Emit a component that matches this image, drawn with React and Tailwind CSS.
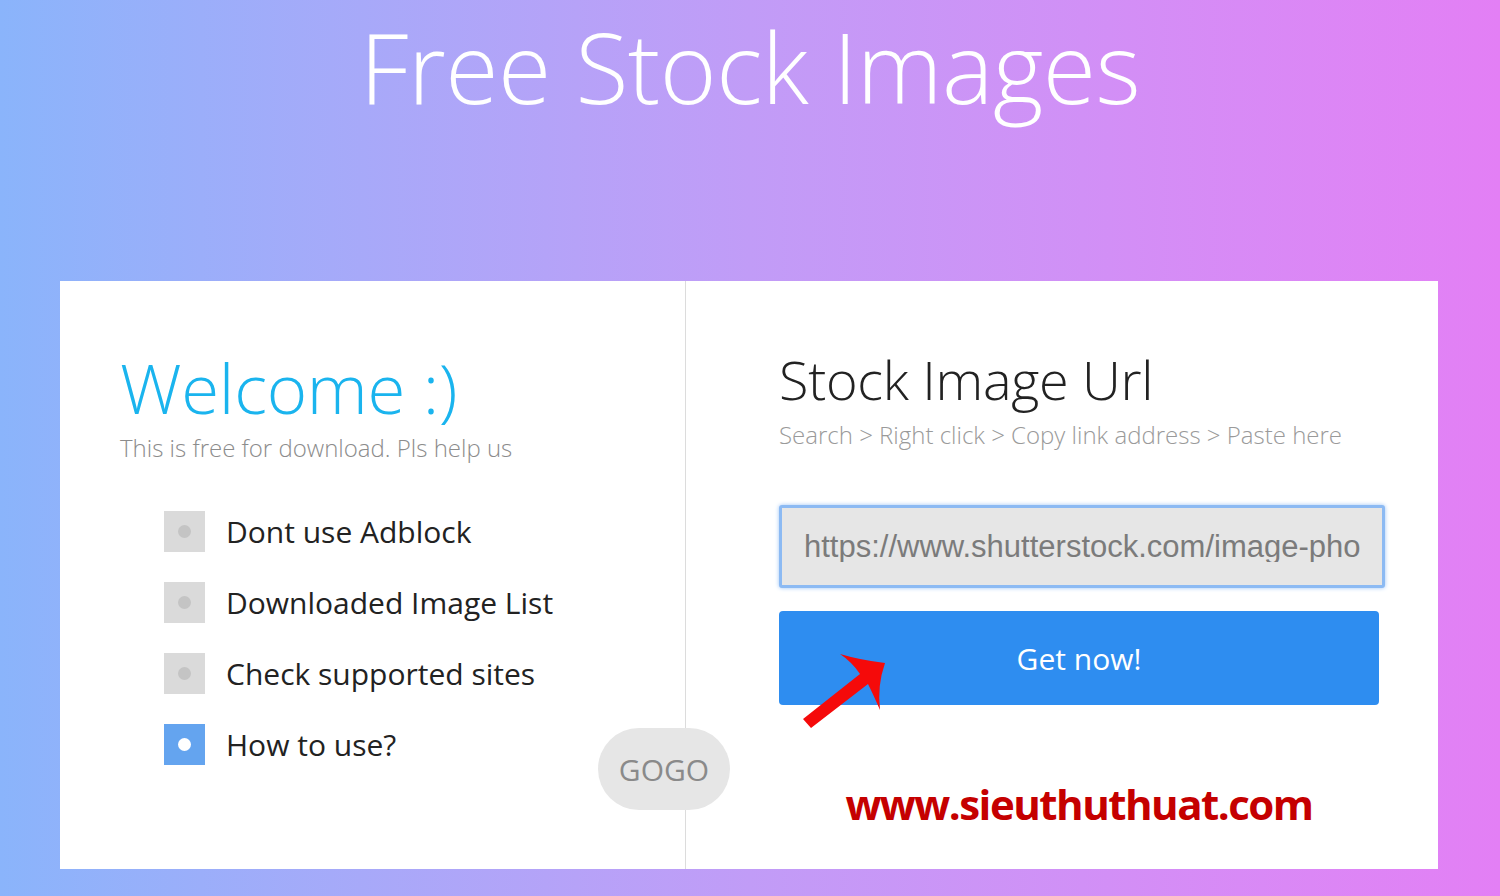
import React from 'react';

const items = [
  { label: 'Dont use Adblock', active: false },
  { label: 'Downloaded Image List', active: false },
  { label: 'Check supported sites', active: false },
  { label: 'How to use?', active: true },
];

const Arrow = () => (
  <svg
    className="absolute left-[795px] top-[645px] pointer-events-none"
    width="100"
    height="90"
    viewBox="795 645 100 90"
  >
    <path
      d="M840 654 Q860 660 885 663 Q877 686 880 710 Q873 694 868 684 L811 728 L803 719 L860 674 Q852 662 840 654 Z"
      fill="#f50a0a"
    />
  </svg>
);

const App = () => {
  return (
    <div
      className="relative w-[1500px] h-[896px] overflow-hidden bg-linear-to-r from-[#8ab4fb] via-[#c19cf7] to-[#e37ff5]"
      style={{ fontFamily: '"Open Sans", "Noto Sans", sans-serif' }}
    >
      <div className="h-[281px] pt-[18px] text-center">
        <h1 className="text-[97px] leading-none font-light text-white tracking-[-0.5px]">
          Free Stock Images
        </h1>
      </div>

      <div className="relative ml-[60px] w-[1378px] h-[588px] bg-white flex">
        {/* left */}
        <div className="w-[626px] border-r border-[#dcdcdc] pt-[72px] pl-[60px]">
          <h2 className="text-[69px] leading-none font-light text-[#1ab4ee] tracking-[-0.3px]">
            Welcome :)
          </h2>
          <p className="mt-[14px] text-[24px] leading-none font-light text-[#8c8c8c]">
            This is free for download. Pls help us
          </p>
          <ul className="mt-[51px] ml-[44px] flex flex-col gap-[30px]">
            {items.map((it) => (
              <li key={it.label} className="flex items-center gap-[21px]">
                <span
                  className={
                    it.active
                      ? 'w-[41px] h-[41px] bg-[#64a4ef] flex items-center justify-center'
                      : 'w-[41px] h-[41px] bg-[#dadada] flex items-center justify-center'
                  }
                >
                  <span
                    className={
                      it.active
                        ? 'w-[13px] h-[13px] rounded-full bg-white'
                        : 'w-[13px] h-[13px] rounded-full bg-[#c4c4c4]'
                    }
                  />
                </span>
                <span className="text-[30px] leading-none text-[#222]">{it.label}</span>
              </li>
            ))}
          </ul>
        </div>

        {/* right */}
        <div className="flex-1 pt-[71px] pl-[93px]">
          <h2 className="text-[54px] leading-none font-light text-[#222] tracking-[-0.3px]">
            Stock Image Url
          </h2>
          <p className="mt-[17px] text-[24px] leading-none font-light text-[#9a9a9a]">
            Search &gt; Right click &gt; Copy link address &gt; Paste here
          </p>
          <div className="mt-[58px] w-[606px] h-[83px] rounded-[3px] border-[3px] border-[#8cbaf3] shadow-[0_0_4px_#9cc4f6] bg-[#e6e6e6] flex items-center pl-[22px] pr-[22px]">
            <div className="flex-1 overflow-hidden">
              <span
                className="block text-[31px] leading-none text-[#7b7b7b] whitespace-nowrap"
                style={{ fontFamily: '"Liberation Sans", Arial, sans-serif' }}
              >
                https://www.shutterstock.com/image-photo
              </span>
            </div>
          </div>
          <button className="mt-[23px] w-[600px] h-[94px] rounded-[4px] bg-[#2e8df0] text-white text-[30px] flex items-center justify-center">
            Get now!
          </button>
          <div className="mt-[78px] w-[600px] text-center text-[42px] leading-none font-bold tracking-[-1.5px] text-[#c50000]">
            www.sieuthuthuat.com
          </div>
        </div>

        {/* GOGO pill over divider */}
        <div className="absolute left-[538px] top-[447px] w-[132px] h-[82px] rounded-full bg-[#e6e6e6] flex items-center justify-center text-[30px] text-[#8a8a8a]">
          GOGO
        </div>
      </div>

      <Arrow />
    </div>
  );
};

export default App;
